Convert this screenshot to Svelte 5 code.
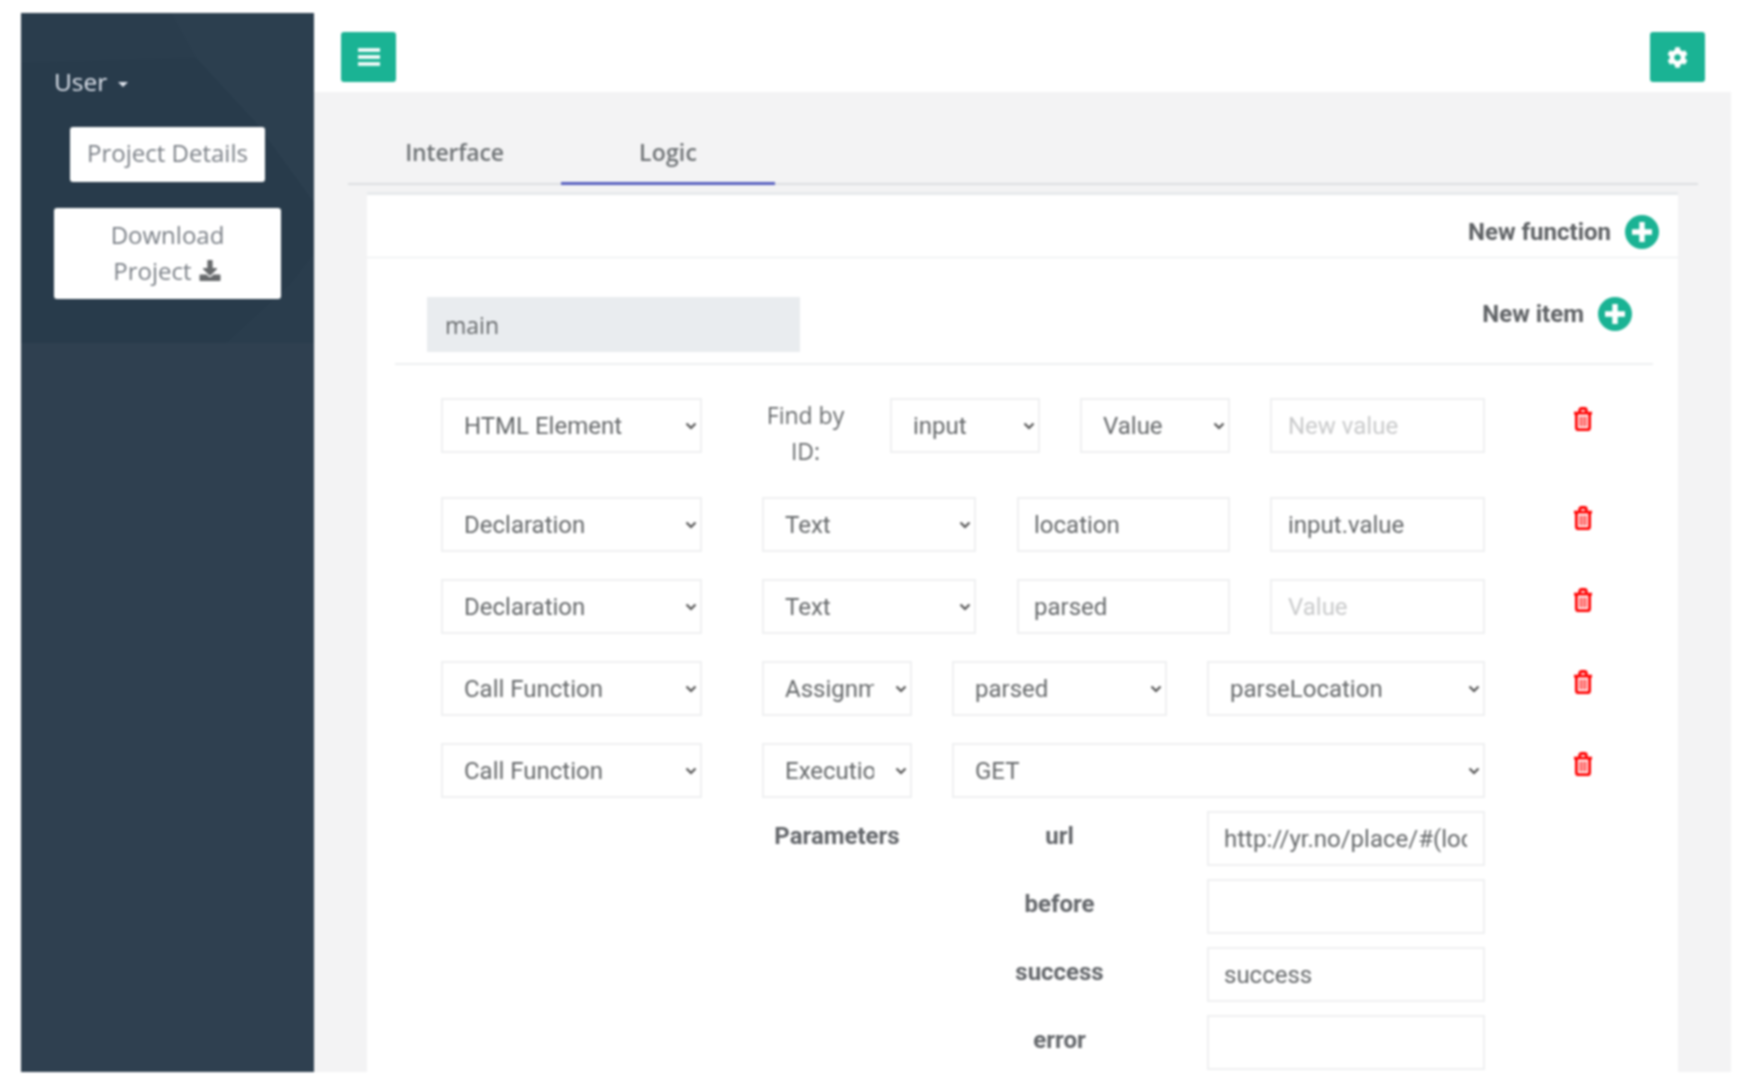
<script>
  const cog = "M487.4 315.7l-42.6-24.6c4.3-23.2 4.3-47 0-70.2l42.6-24.6c4.9-2.8 7.1-8.6 5.5-14-11.1-35.6-30-67.8-54.7-94.6-3.8-4.1-10-5.1-14.8-2.3L380.8 110c-17.9-15.4-38.5-27.3-60.8-35.1V25.8c0-5.6-3.9-10.5-9.4-11.7-36.7-8.2-74.3-7.8-109.2 0-5.5 1.2-9.4 6.1-9.4 11.7V75c-22.2 7.9-42.8 19.8-60.8 35.1L88.7 85.5c-4.9-2.8-11-1.9-14.8 2.3-24.7 26.7-43.6 58.9-54.7 94.6-1.7 5.4.6 11.2 5.5 14L67.3 221c-4.3 23.2-4.3 47 0 70.2l-42.6 24.6c-4.9 2.8-7.1 8.6-5.5 14 11.1 35.6 30 67.8 54.7 94.6 3.8 4.1 10 5.1 14.8 2.3l42.6-24.6c17.9 15.4 38.5 27.3 60.8 35.1v49.2c0 5.6 3.9 10.5 9.4 11.7 36.7 8.2 74.3 7.8 109.2 0 5.5-1.2 9.4-6.1 9.4-11.7v-49.2c22.2-7.9 42.8-19.8 60.8-35.1l42.6 24.6c4.9 2.8 11 1.9 14.8-2.3 24.7-26.7 43.6-58.9 54.7-94.6 1.5-5.5-.7-11.3-5.6-14.1zM256 336c-44.1 0-80-35.9-80-80s35.9-80 80-80 80 35.9 80 80-35.9 80-80 80z";
  const dl = "M216 0h80c13.3 0 24 10.7 24 24v168h87.7c17.8 0 26.7 21.5 14.1 34.1L269.7 378.3c-7.5 7.5-19.8 7.5-27.3 0L90.1 226.1c-12.6-12.6-3.7-34.1 14.1-34.1H192V24c0-13.3 10.7-24 24-24zm296 376v112c0 13.3-10.7 24-24 24H24c-13.3 0-24-10.7-24-24V376c0-13.3 10.7-24 24-24h146.7l49 49c20.1 20.1 52.5 20.1 72.6 0l49-49H488c13.3 0 24 10.7 24 24z";
  const params = [
    { key: "url", value: "http://yr.no/place/#(location)" },
    { key: "before", value: "" },
    { key: "success", value: "success" },
    { key: "error", value: "" }
  ];
</script>

{#snippet trash()}
  <svg class="trash" viewBox="0 0 20 24" aria-hidden="true">
    <path d="M1 6.2h18M3.4 6.2v14.6c0 1 .7 1.9 1.7 1.9h9.8c1 0 1.7-.9 1.7-1.9V6.2M6.7 6V3.4c0-1 .8-1.9 1.8-1.9h3c1 0 1.8.9 1.8 1.9V6" fill="none" stroke="#f00" stroke-width="2.8"/>
    <path d="M7.4 9.5v10M10 9.5v10M12.6 9.5v10" fill="none" stroke="#f00" stroke-width="1.3"/>
  </svg>
{/snippet}

{#snippet plus()}
  <svg class="plus" viewBox="0 0 34 34" aria-hidden="true">
    <circle cx="17" cy="17" r="17" fill="#1ab394"/>
    <path d="M17 7v20M7 17h20" stroke="#fff" stroke-width="5.4"/>
  </svg>
{/snippet}

<div class="shell">
  <aside class="side">
    <div class="profile">
      <svg class="pattern" viewBox="0 0 293 330" preserveAspectRatio="none" aria-hidden="true">
        <polygon points="0,0 293,0 293,330 0,330" fill="#2a3d4d"/>
        <polygon points="150,0 293,0 293,190 235,110 175,45" fill="#2c3f4f"/>
        <polygon points="0,50 175,45 235,110 293,190 293,240 270,270 205,330 0,330" fill="#283b4b"/>
      </svg>
      <div class="user">User <span class="caret"></span></div>
      <button class="side-btn details">Project Details</button>
      <button class="side-btn download">Download Project
        <svg class="dl" viewBox="0 0 512 512" aria-hidden="true"><path d={dl} fill="#676a6c"/></svg>
      </button>
    </div>
  </aside>

  <main class="main">
    <header class="top">
      <button class="tbtn" aria-label="Menu">
        <svg class="bars" viewBox="0 0 22 18" aria-hidden="true"><path d="M0 2h22M0 9h22M0 16h22" stroke="#fff" stroke-width="3.6"/></svg>
      </button>
      <button class="tbtn" aria-label="Settings">
        <svg class="cog" viewBox="0 0 512 512" aria-hidden="true"><path d={cog} fill="#fff"/></svg>
      </button>
    </header>

    <nav class="tabs">
      <span class="tab first">Interface</span>
      <span class="tab active">Logic</span>
    </nav>

    <section class="card">
      <div class="card-head"><b>New function</b>{@render plus()}</div>
      <div class="card-body">
        <div class="fn">
          <input class="fn-name" value="main" readonly />
          <div class="new-item"><b>New item</b>{@render plus()}</div>
        </div>

        <div class="rows">
          <div class="row">
            <select class="c-type"><option>HTML Element</option><option>Declaration</option><option>Call Function</option></select>
            <div class="findby">Find by ID:</div>
            <select class="c-150 s1"><option>input</option></select>
            <select class="c-150 s2"><option>Value</option></select>
            <input class="c-last" placeholder="New value" />
            {@render trash()}
          </div>
          <div class="row">
            <select class="c-type"><option>Declaration</option></select>
            <select class="c-214 g60 g41"><option>Text</option></select>
            <input class="c-213 g40 tight" value="location" />
            <input class="c-last" value="input.value" />
            {@render trash()}
          </div>
          <div class="row">
            <select class="c-type"><option>Declaration</option></select>
            <select class="c-214 g60 g41"><option>Text</option></select>
            <input class="c-213 g40 tight" value="parsed" />
            <input class="c-last" placeholder="Value" />
            {@render trash()}
          </div>
          <div class="row">
            <select class="c-type"><option>Call Function</option></select>
            <select class="c-150 g60 g40"><option>Assignment</option></select>
            <select class="c-215 g40"><option>parsed</option></select>
            <select class="c-278"><option>parseLocation</option></select>
            {@render trash()}
          </div>
          <div class="row">
            <select class="c-type"><option>Call Function</option></select>
            <select class="c-150 g60 g40"><option>Execution</option></select>
            <select class="c-533"><option>GET</option></select>
            {@render trash()}
          </div>
        </div>

        <div class="params">
          {#each params as p, i}
            <div class="param">
              <b class="p-title">{i === 0 ? "Parameters" : ""}</b>
              <b class="p-key">{p.key}</b>
              <input class="p-val" value={p.value} />
            </div>
          {/each}
        </div>
      </div>
    </section>
  </main>
</div>

<style>
  :global(body) { margin: 0; background: #fff; }
  .shell {
    display: flex;
    height: 1059px;
    margin: 13px 17px 16px 21px;
    font-family: "Roboto", sans-serif;
    color: #676a6c;
    overflow: hidden;
    filter: blur(0.8px);
  }
  .side { width: 293px; flex: none; background: #2f4050; }
  .profile {
    position: relative;
    height: 330px;
    box-sizing: border-box;
    padding-top: 46px;
    display: flex;
    flex-direction: column;
    align-items: center;
    font-family: "Open Sans", sans-serif;
  }
  .pattern { position: absolute; inset: 0; width: 100%; height: 100%; }
  .user {
    position: relative;
    align-self: flex-start;
    margin-left: 33px;
    font-size: 24.5px;
    line-height: 46px;
    height: 46px;
    color: #dfe4ed;
    margin-bottom: 22px;
  }
  .caret {
    display: inline-block;
    width: 0; height: 0;
    margin-left: 4px;
    vertical-align: middle;
    border-top: 5px solid #dfe4ed;
    border-left: 5px solid transparent;
    border-right: 5px solid transparent;
  }
  .side-btn {
    position: relative;
    border: 0;
    background: #fff;
    border-radius: 3px;
    color: #7b8087;
    font: 400 24px/36px "Open Sans", sans-serif;
    text-align: center;
    padding: 0;
  }
  .details { width: 195px; height: 55px; margin-bottom: 26px; padding-bottom: 4px; }
  .download { width: 227px; height: 91px; padding: 0 40px 2px; }
  .dl { width: 24px; height: 21px; vertical-align: -1px; }

  .main { flex: 1; min-width: 0; background: #f3f3f4; display: flex; flex-direction: column; }
  .top {
    height: 79px;
    box-sizing: border-box;
    background: #fff;
    display: flex;
    justify-content: space-between;
    padding: 19px 26px 0 27px;
    flex: none;
  }
  .tbtn {
    width: 55px;
    height: 50px;
    background: #1ab394;
    border: 0;
    border-radius: 3px;
    padding: 0;
    display: flex;
    align-items: center;
    justify-content: center;
  }
  .bars { width: 22px; height: 18px; }
  .cog { width: 21px; height: 21px; }

  .tabs {
    display: flex;
    margin: 0 33px 0 34px;
    height: 93px;
    box-sizing: border-box;
    border-bottom: 2px solid #dcdfe1;
    flex: none;
    font-family: "Open Sans", sans-serif;
  }
  .tab {
    box-sizing: border-box;
    height: 93px;
    line-height: 120px;
    text-align: center;
    font-size: 23px;
    font-weight: 600;
    color: #6f7376;
  }
  .tab.first { width: 213px; letter-spacing: -0.2px; }
  .tab.active { width: 214px; border-bottom: 3px solid #5a62c0; letter-spacing: 0.2px; }

  .card {
    flex: 1;
    margin: 7px 53px 0;
    background: #fff;
    border-top: 3px solid #e7eaec;
    min-height: 0;
  }
  .card-head {
    height: 63px;
    box-sizing: border-box;
    border-bottom: 1px solid #e7eaec;
    display: flex;
    justify-content: flex-end;
    align-items: center;
    padding: 11px 19px 0 0;
    gap: 14px;
    font-size: 24px;
  }
  .card-head b, .new-item b { font-weight: 700; color: #5f6265; }
  .plus { width: 34px; height: 34px; flex: none; }
  .card-body { padding: 39px 25px 0 28px; }
  .fn {
    display: flex;
    justify-content: space-between;
    align-items: flex-start;
    padding: 0 21px 11px 32px;
    border-bottom: 2px solid #eef0f1;
    height: 55px;
    box-sizing: content-box;
  }
  .fn-name {
    width: 373px;
    height: 55px;
    box-sizing: border-box;
    border: 0;
    border-radius: 0;
    background: #e9ecef;
    padding: 0 18px;
    font-family: "Open Sans", sans-serif;
    font-size: 23px;
    color: #676a6c;
    outline: none;
  }
  .new-item {
    display: flex;
    align-items: center;
    gap: 14px;
    height: 34px;
    font-size: 24px;
  }

  .rows { padding: 33px 0 0 46px; display: flex; flex-direction: column; gap: 27px; }
  .row { display: flex; align-items: flex-start; }
  select, input:not(.fn-name) {
    box-sizing: border-box;
    height: 55px;
    border: 2px solid #eff0f1;
    border-radius: 0;
    background-color: #fff;
    color: #676a6c;
    font-family: "Roboto", sans-serif;
    font-size: 24px;
    outline: none;
    flex: none;
  }
  select {
    appearance: none;
    -webkit-appearance: none;
    padding: 0 36px 0 21px;
    background-image: url("data:image/svg+xml,%3Csvg xmlns='http://www.w3.org/2000/svg' viewBox='0 0 12 8'%3E%3Cpath d='M1.5 1.5 6 6l4.5-4.5' fill='none' stroke='%23555' stroke-width='2.2'/%3E%3C/svg%3E");
    background-repeat: no-repeat;
    background-position: right 3px center;
    background-size: 12px 8px;
  }
  input:not(.fn-name) { padding: 0 16px; }
  input.tight { padding: 0 15px; }
  input.p-val { padding: 0 16px 0 15px; }
  input::placeholder { color: #c9cacb; opacity: 1; }

  .c-type { width: 261px; }
  .findby {
    width: 87px;
    margin: -1px 41px 1px 60px;
    text-align: center;
    font-family: "Open Sans", sans-serif;
    font-size: 23px;
    line-height: 36px;
    flex: none;
  }
  .c-150 { width: 150px; }
  .s1, .s2 { margin-right: 40px; }
  .c-213 { width: 213px; }
  .c-214 { width: 214px; }
  .c-215 { width: 215px; }
  .c-278 { width: 278px; }
  .c-533 { width: 533px; }
  .c-last { width: 215px; }
  .g60 { margin-left: 60px; }
  .g41 { margin-right: 41px; }
  .g40 { margin-right: 40px; }
  .trash { width: 20px; height: 24px; margin: 9px 0 0 88px; flex: none; }

  .params { padding: 13px 0 0 367px; display: flex; flex-direction: column; gap: 13px; }
  .param { display: flex; align-items: flex-start; }
  .param b { font-size: 24px; font-weight: 700; line-height: 51px; text-align: center; color: #63666a; flex: none; }
  .p-title { width: 150px; margin-right: 40px; }
  .p-key { width: 215px; margin-right: 40px; }
  .p-val { width: 278px; }
</style>
